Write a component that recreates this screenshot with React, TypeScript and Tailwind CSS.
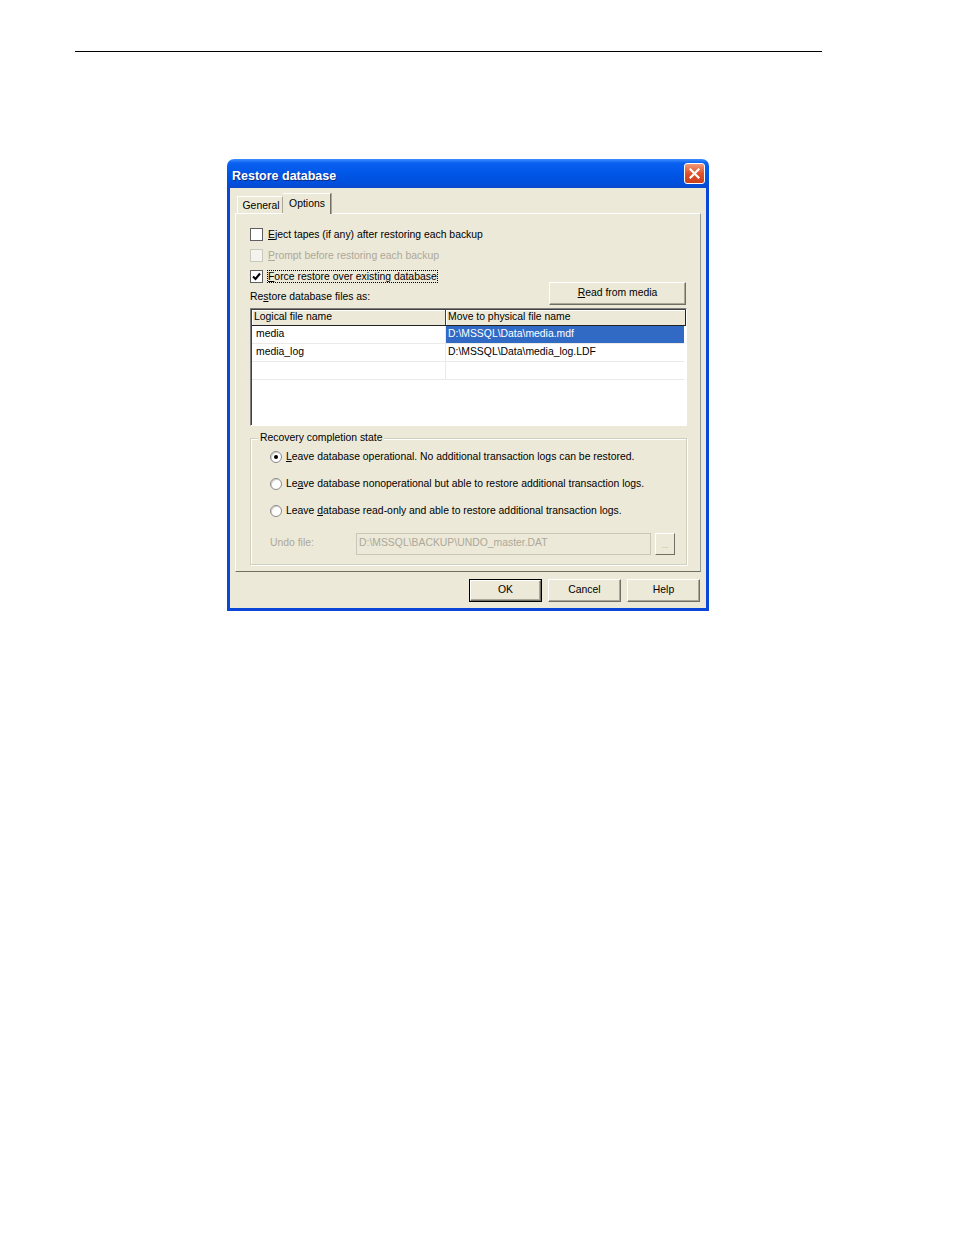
import React from "react";

const FONT = { fontFamily: '"Liberation Sans", Arial, sans-serif' };

function Check({ checked, disabled, label }: { checked?: boolean; disabled?: boolean; label: React.ReactNode }) {
  return (
    <div className="flex h-[21px] items-center">
      <div
        className={`flex h-[13px] w-[13px] items-center justify-center border ${
          disabled ? "border-[#cac8bb] bg-[#f4f3ee]" : "border-[#5f5f5f] bg-white"
        }`}
      >
        {checked && (
          <svg width="9" height="9" viewBox="0 0 9 9">
            <path d="M1 4.5 L3.5 7 L8 1.5" fill="none" stroke="#000" strokeWidth="2" />
          </svg>
        )}
      </div>
      <span className={`ml-[5px] ${disabled ? "text-[#aca899]" : "text-black"}`}>{label}</span>
    </div>
  );
}

function Radio({ checked, label }: { checked?: boolean; label: React.ReactNode }) {
  return (
    <div className="flex h-[27px] items-center">
      <div className="flex h-[12px] w-[12px] items-center justify-center rounded-full border border-[#8a8a8a] bg-white shadow-[inset_1px_1px_0_#d4d0c8]">
        {checked && <div className="h-[4px] w-[4px] rounded-full bg-black" />}
      </div>
      <span className="ml-[4px]">{label}</span>
    </div>
  );
}

function Btn({ children, def, w = "w-[73px]" }: { children: React.ReactNode; def?: boolean; w?: string }) {
  return (
    <div className={`${w} h-[23px] ${def ? "border border-black" : ""}`}>
      <div className="flex h-full w-full items-center justify-center border border-t-white border-l-white border-r-[#716f64] border-b-[#716f64] bg-[#ece9d8] pb-[2px] shadow-[inset_-1px_-1px_0_#aca899]">
        {children}
      </div>
    </div>
  );
}

export default function App() {
  return (
    <div className="relative h-[1235px] w-[954px] overflow-hidden bg-white text-[10.4px] leading-[12px] text-black" style={FONT}>
      <div className="ml-[75px] mt-[51px] h-px w-[747px] bg-black" />

      {/* dialog */}
      <div className="ml-[227px] mt-[107px] w-[482px]">
        {/* title bar */}
        <div className="flex h-[29px] items-center justify-between rounded-t-[7px] bg-[linear-gradient(to_bottom,#3d8fff_0%,#0a60f0_14%,#0056e6_50%,#004fdc_85%,#0a48cc_100%)] pl-[5px] pr-[4px]">
          <span className="mt-[4px] text-[12.5px] font-bold text-white [text-shadow:1px_1px_0_#0a2a80]">Restore database</span>
          <div className="flex h-[21px] w-[21px] items-center justify-center rounded-[3px] border border-white bg-[linear-gradient(to_bottom,#f19a7c,#e0522b_50%,#c8401c)]">
            <svg width="11" height="11" viewBox="0 0 11 11">
              <path d="M1.5 1.5 L9.5 9.5 M9.5 1.5 L1.5 9.5" stroke="#fff" strokeWidth="2.2" strokeLinecap="square" />
            </svg>
          </div>
        </div>

        {/* body */}
        <div className="h-[423px] border-x-[3px] border-b-[3px] border-[#0a46d8] bg-[#ece9d8] pt-[5px]">
          {/* tabs */}
          <div className="flex h-[20px] items-end pl-[7px]">
            <div className="flex h-[17px] w-[46px] items-center justify-center border-l border-t border-r border-l-white border-t-white border-r-[#aca899] pt-[1px] pl-[2px]">
              General
            </div>
            <div className="relative z-10 -mb-px flex h-[21px] w-[48px] items-center justify-center border-t border-r border-t-white border-r-[#716f64] bg-[#ece9d8] pb-[1px] pl-[1px] shadow-[1px_0_0_#aca899]">
              Options
            </div>
          </div>

          {/* panel */}
          <div className="mx-[5px] h-[359px] border border-t-white border-l-white border-r-[#919b9c] border-b-[#716f64] px-[14px] pt-[10px]">
            <Check label={<><u>E</u>ject tapes (if any) after restoring each backup</>} />
            <Check disabled label={<><u>P</u>rompt before restoring each backup</>} />
            <Check
              checked
              label={
                <span className="outline outline-1 outline-dotted outline-black">
                  <u>F</u>orce restore over existing database
                </span>
              }
            />

            <div className="-mt-[4px] flex h-[22px] items-end justify-between">
              <span className="pb-[2px]">
                Re<u>s</u>tore database files as:
              </span>
              <Btn w="w-[137px]">
                <span className="mt-[1px]">
                  <u>R</u>ead from media
                </span>
              </Btn>
            </div>

            {/* file table */}
            <div className="mt-[3px] h-[118px] w-[437px] border border-t-[#808080] border-l-[#808080] border-r-white border-b-white bg-white shadow-[inset_1px_1px_0_#404040]">
              <div className="ml-px mt-px flex h-[16px] border-b border-[#222]">
                <div className="flex h-[15px] w-[194px] items-center border-r border-[#404040] bg-[#ece9d8] pb-[1px] pl-[2px] shadow-[inset_1px_1px_0_#fff]">
                  Logical file name
                </div>
                <div className="flex h-[15px] flex-1 items-center border-r border-[#222] bg-[#ece9d8] pb-[1px] pl-[2px] shadow-[inset_1px_1px_0_#fff]">
                  Move to physical file name
                </div>
              </div>
              {[
                ["media", "D:\\MSSQL\\Data\\media.mdf", true],
                ["media_log", "D:\\MSSQL\\Data\\media_log.LDF", false],
                ["", "", false],
              ].map(([a, b, sel], i) => (
                <div key={i} className="ml-px mr-[2px] flex h-[18px] border-b border-[#ebeae6]">
                  <div className="flex w-[194px] items-center border-r border-[#ebeae6] pb-[1px] pl-[4px]">{a as string}</div>
                  <div className={`flex flex-1 items-center pb-[1px] pl-[2px] ${sel ? "bg-[#316ac5] text-white" : ""}`}>{b as string}</div>
                </div>
              ))}
            </div>

            {/* recovery group */}
            <div className="relative mt-[12px] h-[127px] w-[437px] border border-[#d0d0bf] pl-[19px] pt-[4px] shadow-[inset_1px_1px_0_#fff,1px_1px_0_#fff]">
              <span className="absolute -top-[7px] left-[7px] bg-[#ece9d8] px-[2px]">Recovery completion state</span>
              <Radio checked label={<><u>L</u>eave database operational. No additional transaction logs can be restored.</>} />
              <Radio label={<>Le<u>a</u>ve database nonoperational but able to restore additional transaction logs.</>} />
              <Radio label={<>Leave <u>d</u>atabase read-only and able to restore additional transaction logs.</>} />
              <div className="mt-[9px] flex h-[22px] items-center">
                <span className="w-[86px] pb-[3px] text-[#aca899]">Undo file:</span>
                <div className="flex h-[22px] w-[295px] items-center border border-[#c9c7ba] bg-[#ece9d8] pb-[3px] pl-[2px] text-[#aca899]">
                  D:\MSSQL\BACKUP\UNDO_master.DAT
                </div>
                <div className="ml-[4px] flex h-[22px] w-[20px] items-end justify-center border border-t-white border-l-white border-r-[#716f64] border-b-[#716f64] pb-[4px] text-[8px] leading-[8px] text-[#aca899]">
                  ...
                </div>
              </div>
            </div>
          </div>

          {/* buttons */}
          <div className="mt-[7px] flex justify-end gap-[6px] pr-[6px]">
            <Btn def>OK</Btn>
            <Btn>Cancel</Btn>
            <Btn>Help</Btn>
          </div>
        </div>
      </div>
    </div>
  );
}
